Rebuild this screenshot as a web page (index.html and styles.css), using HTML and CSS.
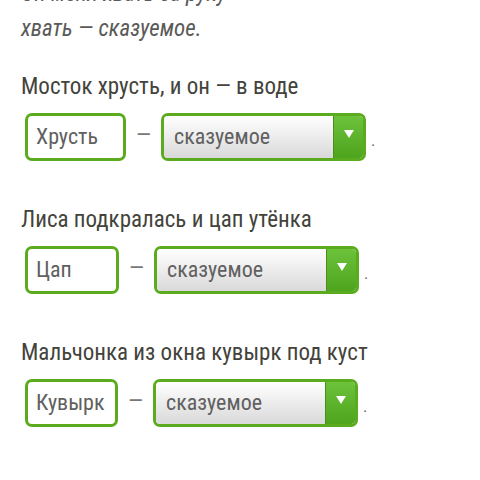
FILE: index.html
```html
<!DOCTYPE html>
<html lang="ru">
<head>
<meta charset="utf-8">
<link rel="stylesheet" href="styles.css">
</head>
<body>
<div class="page">
  <p class="note">Он меня хвать за руку<br>хвать — сказуемое.</p>

  <div class="task">
    <h3 class="title">Мосток хрусть, и он — в воде</h3>
    <div class="row">
      <div class="field w100">Хрусть</div>
      <span class="dash">—</span>
      <div class="select">
        <span class="select-text">сказуемое</span>
        <span class="select-arrow"><svg width="12" height="10" viewBox="0 0 12 10"><path d="M1 1h10L6 9z" fill="#fff"/></svg></span>
      </div>
      <span class="dot">.</span>
    </div>
  </div>

  <div class="task">
    <h3 class="title">Лиса подкралась и цап утёнка</h3>
    <div class="row">
      <div class="field w94">Цап</div>
      <span class="dash">—</span>
      <div class="select">
        <span class="select-text">сказуемое</span>
        <span class="select-arrow"><svg width="12" height="10" viewBox="0 0 12 10"><path d="M1 1h10L6 9z" fill="#fff"/></svg></span>
      </div>
      <span class="dot">.</span>
    </div>
  </div>

  <div class="task">
    <h3 class="title">Мальчонка из окна кувырк под куст</h3>
    <div class="row">
      <div class="field w93">Кувырк</div>
      <span class="dash">—</span>
      <div class="select">
        <span class="select-text">сказуемое</span>
        <span class="select-arrow"><svg width="12" height="10" viewBox="0 0 12 10"><path d="M1 1h10L6 9z" fill="#fff"/></svg></span>
      </div>
      <span class="dot">.</span>
    </div>
  </div>
</div>
</body>
</html>
```

FILE: styles.css
```css
html, body {
  margin: 0;
  padding: 0;
  background: #fff;
}
body {
  font-family: "Roboto Condensed", Roboto, "Noto Sans", sans-serif;
  font-stretch: condensed;
  color: #4a4a46;
}
.page {
  padding: 0 0 0 21px;
}
.note {
  margin: -24px 0 0 0;
  font-style: italic;
  font-size: 23px;
  line-height: 35px;
  color: #5a5a58;
}
.task {
  margin-top: 26px;
}
.task + .task {
  margin-top: 44px;
}
.title {
  margin: 0;
  font-weight: 400;
  font-size: 23px;
  line-height: 30px;
  color: #43433b;
}
.row {
  display: flex;
  align-items: center;
  margin-top: 11px;
  padding-left: 4px;
}
.field {
  box-sizing: border-box;
  height: 48px;
  border: 3px solid #5aab1e;
  border-radius: 7px;
  background: #fff;
  padding-left: 8px;
  font-size: 22px;
  line-height: 42px;
  color: #606060;
}
.w100 { width: 101px; }
.w94 { width: 94px; }
.w93 { width: 93px; }
.dash {
  margin: 0 10px 0 10px;
  font-size: 22px;
  line-height: 22px;
  color: #777;
  width: 15px;
  text-align: center;
  padding-bottom: 4px;
}
.select {
  box-sizing: border-box;
  width: 205px;
  height: 48px;
  border: 3px solid #5aab1e;
  border-radius: 7px;
  display: flex;
  overflow: hidden;
}
.select-text {
  flex: 1;
  background: linear-gradient(#ffffff, #d9d9d9);
  padding-left: 10px;
  font-size: 22px;
  line-height: 42px;
  color: #606060;
  border-right: 1px solid #4a8f1a;
}
.select-arrow {
  width: 29px;
  background: linear-gradient(#6cc23a, #4fa41e);
  display: flex;
  align-items: center;
  justify-content: center;
}
.select-arrow svg {
  margin-top: -6px;
}
.dot {
  margin-left: 5px;
  font-size: 16px;
  color: #666;
  align-self: center;
  padding-top: 6px;
}
```
